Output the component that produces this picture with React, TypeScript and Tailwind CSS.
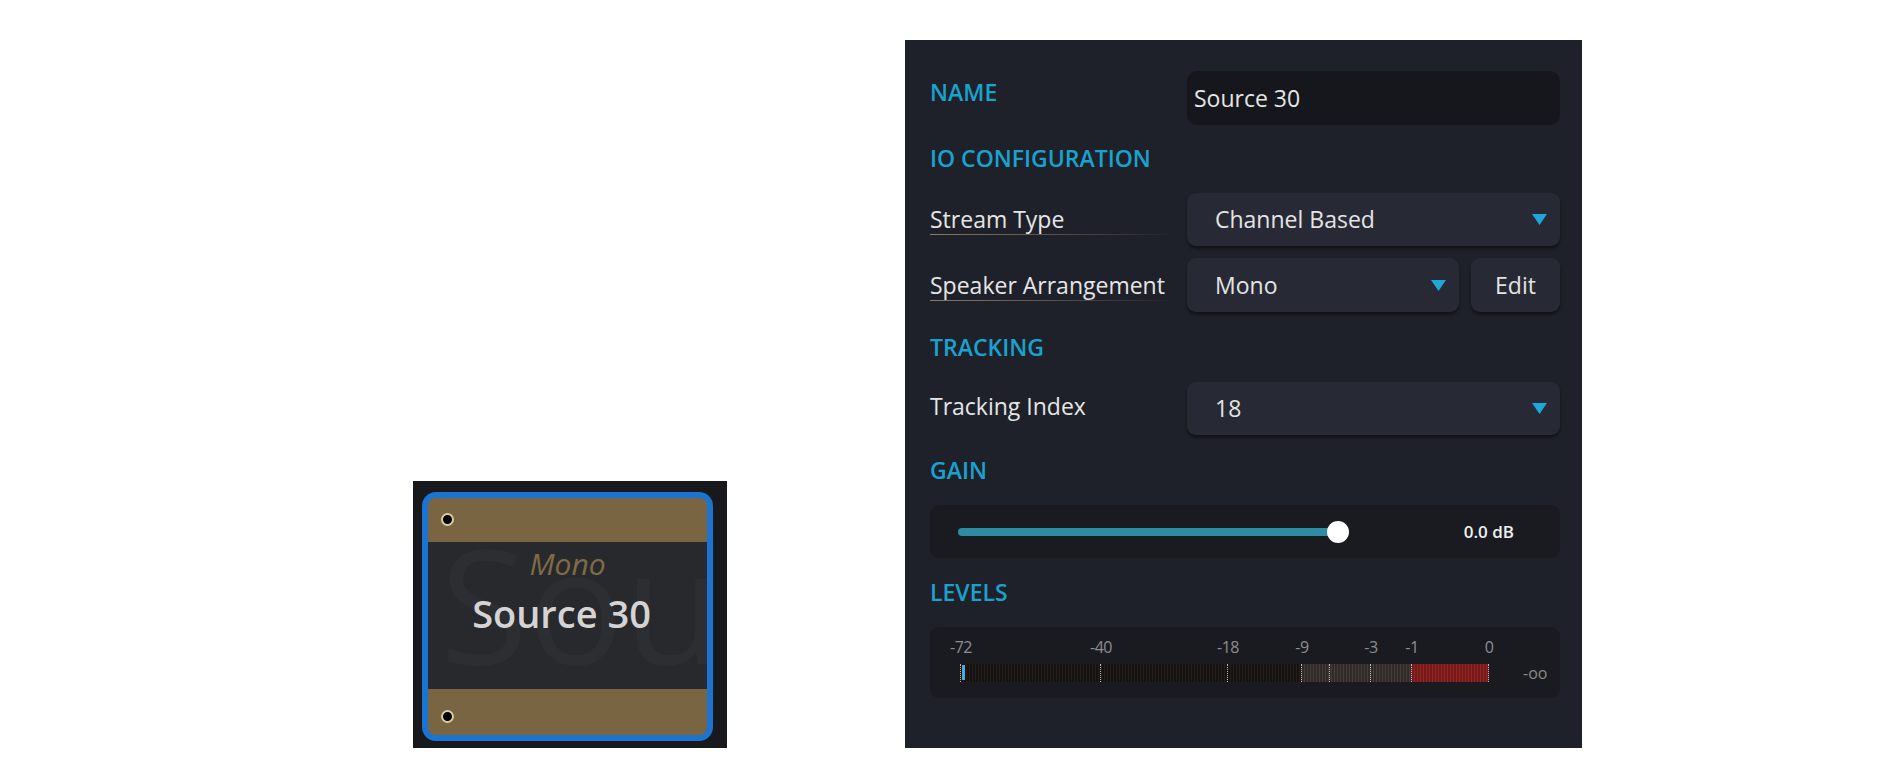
import React from "react";

const font = { fontFamily: '"Open Sans", "Noto Sans", "Liberation Sans", sans-serif' };

function Arrow() {
  return (
    <svg width="15" height="11" viewBox="0 0 15 11" className="shrink-0">
      <polygon points="0,0 15,0 7.5,11" fill="#1ea7da" />
    </svg>
  );
}

function Dot() {
  return <div className="w-[13px] h-[13px] rounded-full bg-black border-[2px] border-[#d9cba2]" />;
}

function Node() {
  return (
    <div className="w-[314px] h-[267px] bg-[#17191d] pl-[9px] pt-[11px]">
      <div className="w-[291px] h-[249px] rounded-[14px] border-[6px] border-[#1b74d1] overflow-hidden flex flex-col bg-[#7a6543]">
        <div className="h-[44px] bg-[#7a6543] pl-[13px] pt-[15px]">
          <Dot />
        </div>
        <div className="h-[147px] bg-[#28292d] relative overflow-hidden flex flex-col items-center">
          <div className="absolute left-[12px] top-[-20px] text-[160px] leading-[160px] text-[#2c2e32] whitespace-nowrap select-none">
            Sou
          </div>
          <div className="relative pt-[4px] text-[30px] leading-[36px] italic text-[#7f6b47]">Mono</div>
          <div className="relative mt-[8px] pr-[12px] text-[38px] leading-[46px] font-semibold text-[#d4d4d4]">
            Source 30
          </div>
        </div>
        <div className="flex-1 bg-[#7a6543] pl-[13px] pt-[21px]">
          <Dot />
        </div>
      </div>
    </div>
  );
}

function Header({ children, className = "" }: { children: React.ReactNode; className?: string }) {
  return (
    <div className={"h-[32px] leading-[32px] text-[23px] font-semibold text-[#1aa2cf] " + className}>{children}</div>
  );
}

function Select({ value, className = "" }: { value: string; className?: string }) {
  return (
    <div
      className={
        "h-full rounded-[9px] bg-[#272a35] shadow-[0_3px_3px_rgba(0,0,0,0.4)] flex items-center pl-[28px] pr-[13px] " +
        className
      }
    >
      <span className="flex-1 text-[#e4e4e4]">{value}</span>
      <Arrow />
    </div>
  );
}

function UnderLabel({ children }: { children: React.ReactNode }) {
  return (
    <div className="w-[257px] shrink-0 flex flex-col">
      <span className="text-[#e6e6e6] leading-[30px]">{children}</span>
      <div className="h-[1px] w-[244px] bg-gradient-to-r from-[#8a7a60] via-[#5a5247] to-transparent" />
    </div>
  );
}

const ticks = [
  { pos: 0, label: "-72" },
  { pos: 140, label: "-40" },
  { pos: 267, label: "-18" },
  { pos: 341, label: "-9" },
  { pos: 369, label: "" },
  { pos: 410, label: "-3" },
  { pos: 451, label: "-1" },
  { pos: 528, label: "0" },
];

function Meter() {
  return (
    <div className="relative w-[529px] h-[18px] flex">
      <div className="w-[341px] h-full bg-[repeating-linear-gradient(90deg,#261d1d_0px,#261d1d_1px,#151212_1px,#151212_3px)]" />
      <div className="w-[110px] h-full bg-[repeating-linear-gradient(90deg,#443d38_0px,#443d38_1px,#302b28_1px,#302b28_3px)]" />
      <div className="w-[78px] h-full bg-[repeating-linear-gradient(90deg,#9a2424_0px,#9a2424_1px,#731a1a_1px,#731a1a_3px)]" />
      <div className="absolute left-[2px] top-[1px] w-[3px] h-[15px] bg-[#4fa9d2]" />
      {ticks.map((t) => (
        <React.Fragment key={t.pos}>
          <div
            className="absolute top-0 h-full border-l border-dotted border-[#b8b8b8]"
            style={{ left: t.pos }}
          />
          {t.label && (
            <div
              className="absolute top-[-27px] -translate-x-1/2 text-[16px] leading-[20px] text-[#8e8e8e] tracking-[-0.5px]"
              style={{ left: t.pos + 1 }}
            >
              {t.label}
            </div>
          )}
        </React.Fragment>
      ))}
    </div>
  );
}

function Panel() {
  return (
    <div className="w-[677px] h-[708px] bg-[#1f212a] pl-[25px] pr-[22px] pt-[31px] flex flex-col text-[23px]">
      <div className="flex h-[54px]">
        <div className="w-[257px] shrink-0 pt-[5px]">
          <Header>NAME</Header>
        </div>
        <div className="flex-1 rounded-[10px] bg-[#16171c] px-[7px] flex items-center text-[#e6e6e6]">Source 30</div>
      </div>

      <Header className="mt-[17px]">IO CONFIGURATION</Header>

      <div className="flex h-[53px] mt-[19px] items-center">
        <UnderLabel>Stream Type</UnderLabel>
        <div className="flex-1 h-full">
          <Select value="Channel Based" />
        </div>
      </div>

      <div className="flex h-[54px] mt-[12px] items-center">
        <UnderLabel>Speaker Arrangement</UnderLabel>
        <div className="flex-1 h-full flex gap-[12px]">
          <Select value="Mono" className="flex-1" />
          <div className="w-[89px] h-full rounded-[9px] bg-[#272a35] shadow-[0_3px_3px_rgba(0,0,0,0.4)] flex items-center justify-center text-[#e4e4e4]">
            Edit
          </div>
        </div>
      </div>

      <Header className="mt-[19px]">TRACKING</Header>

      <div className="flex h-[53px] mt-[19px] items-center">
        <div className="w-[257px] shrink-0 text-[#e6e6e6] leading-[30px] pb-[6px]">Tracking Index</div>
        <div className="flex-1 h-full">
          <Select value="18" />
        </div>
      </div>

      <Header className="mt-[19px]">GAIN</Header>

      <div className="h-[53px] mt-[19px] rounded-[9px] bg-[#1a1b21] flex items-center pl-[28px] pr-[46px]">
        <div className="relative w-[380px] h-[8px] rounded-full bg-[#2c8ca1]">
          <div className="absolute right-[-11px] top-[-7px] w-[22px] h-[22px] rounded-full bg-white" />
        </div>
        <div className="ml-auto text-[17px] font-semibold text-[#f0f0f0]">0.0 dB</div>
      </div>

      <Header className="mt-[18px]">LEVELS</Header>

      <div className="h-[71px] mt-[19px] rounded-[9px] bg-[#1a1b21] pl-[30px] pt-[37px] flex items-start">
        <Meter />
        <div className="ml-[34px] mt-[-1px] text-[16px] leading-[20px] text-[#8a8a8a]">-oo</div>
      </div>
    </div>
  );
}

export default function App() {
  return (
    <div className="w-[1889px] h-[762px] bg-white flex items-start" style={font}>
      <div className="ml-[413px] mt-[481px]">
        <Node />
      </div>
      <div className="ml-[178px] mt-[40px]">
        <Panel />
      </div>
    </div>
  );
}
